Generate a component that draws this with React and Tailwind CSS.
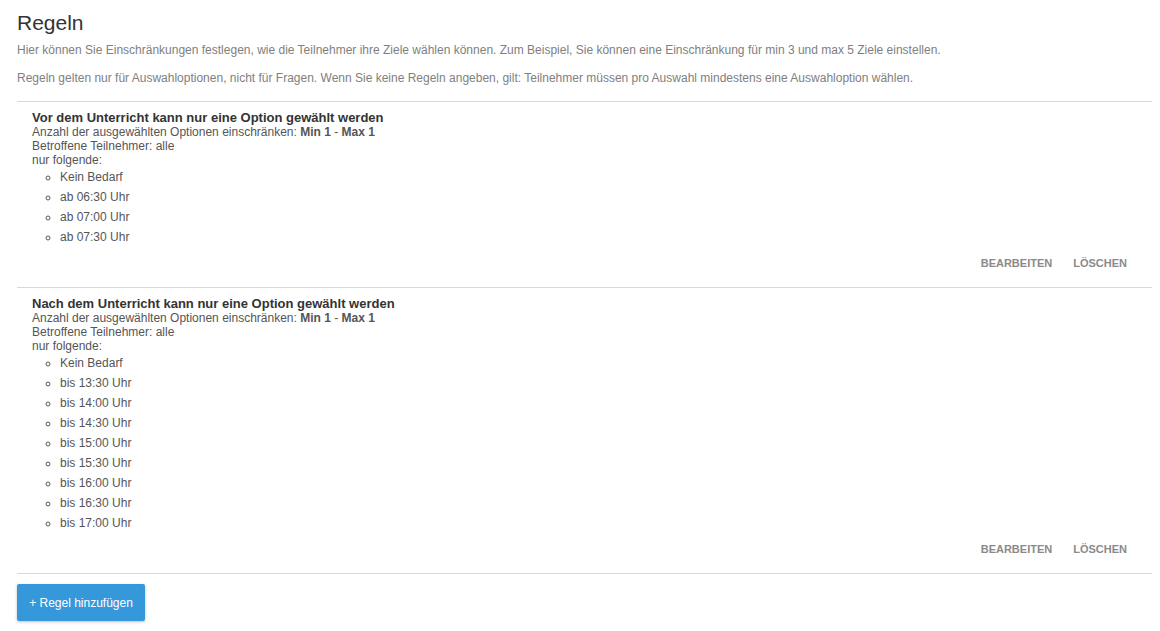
import React from 'react';

const rules = [
  {
    title: 'Vor dem Unterricht kann nur eine Option gewählt werden',
    min: 1,
    max: 1,
    options: ['Kein Bedarf', 'ab 06:30 Uhr', 'ab 07:00 Uhr', 'ab 07:30 Uhr'],
  },
  {
    title: 'Nach dem Unterricht kann nur eine Option gewählt werden',
    min: 1,
    max: 1,
    options: [
      'Kein Bedarf',
      'bis 13:30 Uhr',
      'bis 14:00 Uhr',
      'bis 14:30 Uhr',
      'bis 15:00 Uhr',
      'bis 15:30 Uhr',
      'bis 16:00 Uhr',
      'bis 16:30 Uhr',
      'bis 17:00 Uhr',
    ],
  },
];

const RuleCard = ({ rule }) => (
  <div className="border-b border-[#d8d8d8] pt-[9px] pb-[8px]">
    <div className="px-[15px] text-[12px] leading-[14px] text-[#555]">
      <h3 className="text-[13px] leading-[14px] font-bold text-[#333]">{rule.title}</h3>
      <div>
        Anzahl der ausgewählten Optionen einschränken:{' '}
        <b className="font-bold">Min {rule.min}</b> - <b className="font-bold">Max {rule.max}</b>
      </div>
      <div>Betroffene Teilnehmer: alle</div>
      <div>nur folgende:</div>
      <ul className="list-[circle] pl-[28px]">
        {rule.options.map((opt) => (
          <li key={opt} className="leading-[20px]">{opt}</li>
        ))}
      </ul>
    </div>
    <div className="flex justify-end gap-[21px] pr-[25px] h-[32px] items-center">
      <button className="text-[11px] font-semibold uppercase text-[#8a8a8a]">Bearbeiten</button>
      <button className="text-[11px] font-semibold uppercase text-[#8a8a8a]">Löschen</button>
    </div>
  </div>
);

export default function App() {
  return (
    <div className="min-h-screen bg-white pl-[17px] pr-[8px] font-['Liberation_Sans',Arial,sans-serif]">
      <h1 className="pt-[11px] text-[21px] leading-[23px] text-[#333]">Regeln</h1>
      <p className="mt-[7px] text-[12px] leading-[18px] text-[#808080]">
        Hier können Sie Einschränkungen festlegen, wie die Teilnehmer ihre Ziele wählen können. Zum Beispiel, Sie können eine Einschränkung für min 3 und max 5 Ziele einstellen.
      </p>
      <p className="mt-[10px] text-[12px] leading-[18px] text-[#808080]">
        Regeln gelten nur für Auswahloptionen, nicht für Fragen. Wenn Sie keine Regeln angeben, gilt: Teilnehmer müssen pro Auswahl mindestens eine Auswahloption wählen.
      </p>
      <div className="mt-[14px] border-t border-[#d8d8d8]">
        {rules.map((r) => (
          <RuleCard key={r.title} rule={r} />
        ))}
      </div>
      <button className="mt-[10px] h-[37px] w-[128px] rounded-[2px] bg-[#3498db] text-[12px] text-white shadow-[0_1px_3px_rgba(0,0,0,0.25)]">
        + Regel hinzufügen
      </button>
    </div>
  );
}
